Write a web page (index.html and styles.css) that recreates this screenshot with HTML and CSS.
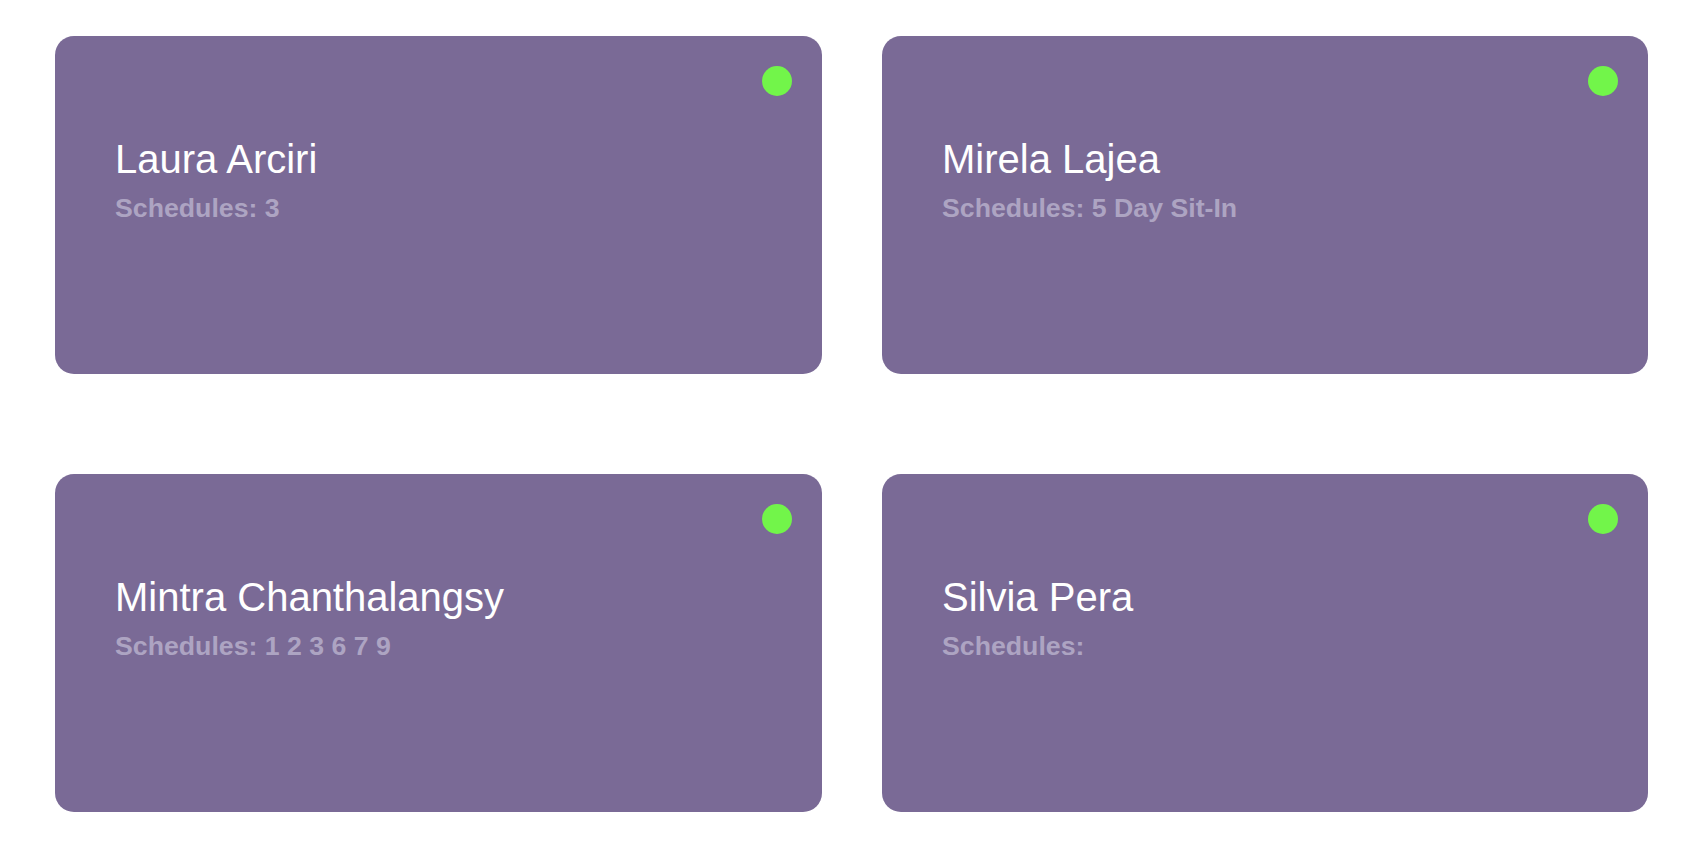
FILE: index.html
```html
<!DOCTYPE html>
<html>
<head>
<meta charset="utf-8">
<link rel="stylesheet" href="styles.css">
</head>
<body>
<div class="grid">
  <div class="card">
    <span class="dot"></span>
    <div class="name">Laura Arciri</div>
    <div class="sched">Schedules: 3</div>
  </div>
  <div class="card">
    <span class="dot"></span>
    <div class="name">Mirela Lajea</div>
    <div class="sched">Schedules: 5 Day Sit-In</div>
  </div>
  <div class="card">
    <span class="dot"></span>
    <div class="name">Mintra Chanthalangsy</div>
    <div class="sched">Schedules: 1 2 3 6 7 9</div>
  </div>
  <div class="card">
    <span class="dot"></span>
    <div class="name">Silvia Pera</div>
    <div class="sched">Schedules: </div>
  </div>
</div>
</body>
</html>
```
FILE: styles.css
```css
html, body {
  margin: 0;
  padding: 0;
  background: #ffffff;
}
body {
  font-family: "Liberation Sans", Arial, Helvetica, sans-serif;
}
.grid {
  display: grid;
  grid-template-columns: 767px 766px;
  column-gap: 60px;
  row-gap: 100px;
  padding: 36px 0 0 55px;
}
.card {
  position: relative;
  height: 338px;
  box-sizing: border-box;
  padding: 101px 40px 0 60px;
  background: #7a6a96;
  border-radius: 19px;
}
.dot {
  position: absolute;
  top: 30px;
  right: 30px;
  width: 30px;
  height: 30px;
  border-radius: 50%;
  background: #72f54a;
}
.name {
  color: #ffffff;
  font-size: 40px;
  line-height: 45px;
}
.sched {
  margin-top: 11px;
  color: #ada4c2;
  font-size: 26.7px;
  line-height: 30px;
  font-weight: bold;
}
```
